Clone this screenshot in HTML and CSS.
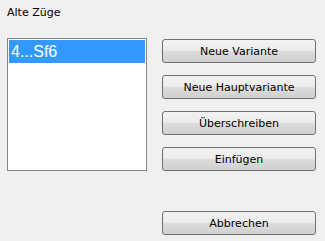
FILE: index.html
```html
<!DOCTYPE html>
<html lang="de">
<head>
  <meta charset="UTF-8">
  <title>Alte Züge</title>
  <link rel="stylesheet" href="styles.css">
</head>
<body>
  <div class="dialog">
    <div class="caption">Alte Züge</div>
    <div class="content">
      <div class="listbox">
        <div class="row selected">4...Sf6</div>
      </div>
      <div class="buttons">
        <button>Neue Variante</button>
        <button>Neue Hauptvariante</button>
        <button>Überschreiben</button>
        <button>Einfügen</button>
        <button class="cancel">Abbrechen</button>
      </div>
    </div>
  </div>
</body>
</html>
```
FILE: styles.css
```css
* {
  box-sizing: border-box;
}

body {
  margin: 0;
  background: #f0f0f0;
  font-family: 'DejaVu Sans', 'Liberation Sans', sans-serif;
  font-size: 11px;
  color: #000;
}

.dialog {
  width: 325px;
  height: 241px;
  padding: 6px 9px 0 7px;
}

.caption {
  height: 14px;
  line-height: 14px;
}

.content {
  display: flex;
  margin-top: 18px;
}

.listbox {
  width: 140px;
  height: 133px;
  background: #fff;
  border: 1px solid #828790;
  padding: 1px;
}

.row {
  height: 23px;
  line-height: 23px;
  padding-left: 2px;
  font-family: 'Liberation Sans', sans-serif;
  font-size: 16px;
}

.row.selected {
  background: #3399ff;
  color: #fff;
}

.buttons {
  display: flex;
  flex-direction: column;
  margin-left: 15px;
  padding-top: 1px;
  gap: 12px;
}

.buttons button {
  width: 154px;
  height: 24px;
  border: 1px solid #707070;
  border-radius: 3px;
  background: linear-gradient(#f2f2f2 0%, #ebebeb 50%, #dddddd 51%, #cfcfcf 100%);
  font-family: 'DejaVu Sans', 'Liberation Sans', sans-serif;
  font-size: 11px;
  color: #000;
  padding: 0;
}

.buttons .cancel {
  margin-top: 28px;
}
```
